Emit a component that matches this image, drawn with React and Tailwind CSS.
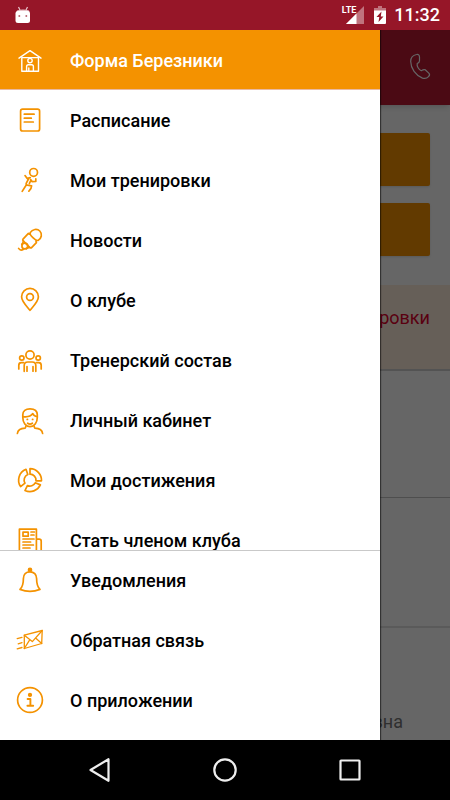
import React from "react";

function Icon({ children, className = "text-[#f49200]" }) {
  return (
    <svg
      viewBox="0 0 30 30"
      className={`size-[30px] shrink-0 ${className}`}
      fill="none"
      stroke="currentColor"
      strokeWidth="1.7"
      strokeLinecap="round"
      strokeLinejoin="round"
      aria-hidden="true"
    >
      {children}
    </svg>
  );
}

const icons = {
  house: (
    <g strokeWidth="1.4">
      <path d="M4 12.2 15 4.7l11 7.5" />
      <path d="M6.8 11.6h16.4M6.8 11.6v13.6h16.7V11.6" />
      <circle cx="15" cy="14.6" r="2.2" />
      <path d="M11.6 25v-4.4q0-1.8 1.8-1.8h3.2q1.8 0 1.8 1.8V25M13.8 22v3" />
    </g>
  ),
  schedule: (
    <>
      <rect x="5.6" y="3.2" width="19" height="21.8" rx="2" />
      <path d="M9.3 8.2h9.8M9.3 12.2h7M9.3 16h9" />
    </>
  ),
  runner: (
    <>
      <circle cx="18.6" cy="6.4" r="3.9" />
      <path d="m10 9.6 2.2 3 3-1M14 12l-2.8 5.4q-.4 1.4 1.2 1.8l4.2.6-.6 2.6-2.2 2.8M11.4 18.6 10.6 20l-3.4 5.4M15.6 13.6l1.6 2 3.6-.2v-2.6M14.4 17.4l1.6-3.2" />
    </>
  ),
  news: (
    <>
      <path d="M15.2 6.600C17.400 3 22.200 2.400 24.800 5s2 7.600-1.800 9.400c-2.200.8-8.800-5.400-7.800-7.800Z" />
      <path d="M14.600 8.200 13.400 7.400 8 13.200q-.6.800 0 1.400l7.200 7.200q.8.400 1.400-.2l4.800-5-.4-1.400" />
      <path d="M8.400 15.200c-.2 1.200-.6 2-1.600 3.200M14.600 21.400c-1.200.2-2.200.6-3.400 1.400" />
      <circle cx="9.800" cy="20" r="2.900" />
      <path d="M3.600 22.400c1 1.600 3 2 5 .8" />
    </>
  ),
  pin: (
    <>
      <path d="M15 24.300C11.600 20 6.600 15.600 6.600 10.800a8.400 8.400 0 0 1 16.800 0C23.400 15.600 18.400 20 15 24.300Z" />
      <circle cx="15" cy="11" r="3.400" />
    </>
  ),
  group: (
    <>
      <circle cx="15" cy="9" r="4.100" />
      <circle cx="6.800" cy="12" r="2.200" />
      <circle cx="23.200" cy="12" r="2.200" />
      <path d="M9.200 25.300v-5.800q0-3.500 3.600-3.500h4.400q3.600 0 3.600 3.500v5.800M12 20.600v4.600M18 20.600v4.600" />
      <path d="M3.800 23v-3.800q0-2.600 2.600-2.600h2M26.200 23v-3.800q0-2.600-2.600-2.600h-2" />
    </>
  ),
  user: (
    <>
      <path d="M7.800 11.600V8.800C7.800 4.800 10.600 2.800 15 2.800s7.300 2 7.300 6v2.800c0 5-3 9.100-7.300 9.100s-7.200-4.100-7.200-9.100Z" />
      <path d="M7.800 10.600c4.200.6 8.200-.4 10-3 .6 1.800 2 2.800 4.400 3" />
      <path d="M12.200 13.400h.3M17.500 13.400h.3M12.600 17.200q2.400 1.800 4.800 0" />
      <path d="M2.400 27.500c.4-3.600 3-5 7.600-5.300.6-.4.800-1 .8-2.200M27.600 27.500c-.4-3.600-3-5-7.600-5.300-.6-.4-.8-1-.8-2.200" />
    </>
  ),
  donut: (
    <>
      <path d="M15 2.700A11.600 11.600 0 0 1 26.500 14.800H21A6 6 0 0 0 15 8.200Z" />
      <path d="M25.400 18.900A11.600 11.600 0 0 1 10 24.500L12.400 19.600A6 6 0 0 0 20.200 16.800Z" />
      <path d="M5.600 20.600A11.600 11.600 0 0 1 11 3.300L12.800 8.500A6 6 0 0 0 10 17.200Z" />
    </>
  ),
  paper: (
    <>
      <path d="M4.400 3.200h17v23H6.400q-2 0-2-2ZM21.400 13.200h2.800q2 0 2 2v9q0 2-2.400 2h-2.400" />
      <path d="M8 6.200h5.200v4H8ZM16 6h3.400M16 9h3M8 13h11M8 16h7.600M8 19h10.400M8 22h7" />
    </>
  ),
  bell: (
    <>
      <circle cx="15" cy="3.900" r="1.500" fill="currentColor" />
      <path d="M15 5.800c-4 0-6.600 2.800-6.600 6.800 0 5.400-.4 8.200-3.400 10.800 5.800 2.200 14.200 2.200 20 0-3-2.600-3.400-5.400-3.400-10.800 0-4-2.600-6.800-6.600-6.800Z" />
    </>
  ),
  mail: (
    <g strokeWidth="1.300">
      <path d="M9.300 9.200 27.200 4.500 26.700 17.500 9.300 22.500Z" />
      <path d="m9.300 9.200 8 6.400 9.900-11.100M9.300 22.500l5.400-8.700M26.700 17.500l-6.100-5.400" />
      <path d="m2.200 12.600 4.800-1.300M3.200 17.800 7 16.700M2.200 22.800 7 21.500" />
    </g>
  ),
  info: (
    <>
      <circle cx="15" cy="14" r="12.400" />
      <circle cx="15" cy="8.900" r="1.300" fill="currentColor" />
      <path d="M12.600 13h2.800v6.800M12.400 19.800h5.800" strokeWidth="1.900" />
    </>
  ),
};

const mainItems = [
  ["schedule", "Расписание"],
  ["runner", "Мои тренировки"],
  ["news", "Новости"],
  ["pin", "О клубе"],
  ["group", "Тренерский состав"],
  ["user", "Личный кабинет"],
  ["donut", "Мои достижения"],
  ["paper", "Стать членом клуба"],
];

const footerItems = [
  ["bell", "Уведомления"],
  ["mail", "Обратная связь"],
  ["info", "О приложении"],
];

function MenuItem({ icon, label }) {
  return (
    <li>
      <a href="#" className="flex h-[60px] items-center gap-[25px] px-[15px] text-black">
        <Icon>{icons[icon]}</Icon>
        <span>{label}</span>
      </a>
    </li>
  );
}

function StatusBar() {
  return (
    <div className="flex h-[30px] shrink-0 items-center bg-[#961628] pr-2.5 pl-[15px] text-white">
      <svg viewBox="0 0 16 18" className="h-[18px] w-4" aria-hidden="true">
        <path d="M3.500 1 5 4M12.500 1 11 4" stroke="#e8c5ca" strokeWidth="1.200" />
        <path d="M2 4.500Q8 2.500 14 4.500L14.500 6h-13Z" fill="#e8c5ca" />
        <rect x=".5" y="5" width="14.500" height="12" rx="2.500" fill="#fff" />
        <circle cx="4.300" cy="10" r="1" fill="#b96672" />
        <circle cx="11.300" cy="10" r="1" fill="#b96672" />
      </svg>
      <div className="ml-auto flex items-center">
        <span className="self-start text-[9px] leading-[10px] font-bold">LTE</span>
        <svg viewBox="0 0 18 18" className="-ml-2.5 size-[18px]" aria-hidden="true">
          <path d="M18 0v18H0Z" fill="#c0737e" />
          <path d="M10.500 7.500V18H0Z" fill="#fff" />
        </svg>
        <svg viewBox="0 0 12 18" className="ml-2.5 h-[18px] w-3" aria-hidden="true">
          <path d="M4 0h4v2h4v3H0V2h4Z" fill="#c0737e" />
          <path d="M0 4.500h12V17q0 1-1 1H1q-1 0-1-1Z" fill="#fff" />
          <path d="M7.500 5.500 2.500 11h2.800L4.500 16l5-5.500H6.800Z" fill="#961628" />
        </svg>
        <span className="ml-2 text-[18px] leading-5 font-medium">11:32</span>
      </div>
    </div>
  );
}

function ClubPage() {
  return (
    <div className="flex h-full flex-col bg-white text-right text-[18px] leading-6">
      <header className="z-10 flex h-[75px] shrink-0 items-center justify-end bg-[#bb1932] pr-[18px] pb-1 shadow-md">
        <button type="button" aria-label="Позвонить" className="text-white">
          <svg
            viewBox="0 0 24 28"
            className="h-7 w-6"
            fill="none"
            stroke="currentColor"
            strokeWidth="1.200"
            strokeLinejoin="round"
            aria-hidden="true"
          >
            <path d="M8.600 2.500c1.800-.4 2.800.6 2.900 2.500v3.800c0 1.700-.8 2.200-2.300 2.700-.6 2.800 1.600 6 4.200 7.200 1.400-1 2.300-1.700 3.800-.9l3.600 3.300c1.300 1.300.9 2.400-.3 3.600-1.600 1.700-3.600 2.200-6 1.400C7.600 23.400 2.800 16.400 2.700 9.400 2.700 5.600 5 3.200 8.600 2.500Z" />
          </svg>
        </button>
      </header>
      <div className="flex h-[180px] shrink-0 flex-col gap-[17px] px-5 pt-7">
        <button type="button" aria-label="Расписание клуба" className="h-[53px] rounded-xs bg-[#f49200] shadow-sm" />
        <button type="button" aria-label="Запись" className="h-[53px] rounded-xs bg-[#f49200] shadow-sm" />
      </div>
      <div className="h-[86px] shrink-0 border-b-2 border-[#d0d0d0] bg-[#ffeedb] px-5 pt-[21px] text-[#e0002b]">
        ровки
      </div>
      <div className="h-[127px] shrink-0 border-b border-[#c4c4c4]" />
      <div className="h-[130px] shrink-0 border-b-2 border-[#e0e0e0]" />
      <div className="grow pt-[82px] pr-[47px] text-[#757575]">вна</div>
    </div>
  );
}

function Drawer() {
  return (
    <nav className="absolute inset-y-0 left-0 flex w-[380px] max-w-[85%] flex-col bg-white text-[18px] leading-6 font-medium shadow-[1px_0_1px_rgba(0,0,0,0.5)]">
      <a
        href="#"
        className="flex h-[60px] shrink-0 items-center gap-[25px] border-b border-[#e9b9a0] bg-[#f49200] px-[15px] pt-0.5 text-white"
      >
        <Icon className="text-white">{icons.house}</Icon>
        <span>Форма Березники</span>
      </a>
      <ul className="min-h-0 grow overflow-hidden pt-px">
        {mainItems.map(([icon, label]) => (
          <MenuItem key={icon} icon={icon} label={label} />
        ))}
      </ul>
      <ul className="shrink-0 border-t border-[#c9c9c9] pb-[9px]">
        {footerItems.map(([icon, label]) => (
          <MenuItem key={icon} icon={icon} label={label} />
        ))}
      </ul>
    </nav>
  );
}

function NavigationBar() {
  return (
    <div className="flex h-[60px] shrink-0 items-center justify-center gap-[97px] bg-black text-[#eeeeee]">
      {[
        ["Назад", <path key="b" d="M22.500 3.200v21.600L4.500 14Z" />],
        ["Домой", <circle key="h" cx="14" cy="14" r="10.700" />],
        ["Обзор", <rect key="o" x="4.500" y="4.500" width="19" height="19" rx=".5" />],
      ].map(([label, shape]) => (
        <button key={label} type="button" aria-label={label}>
          <svg
            viewBox="0 0 28 28"
            className="size-7"
            fill="none"
            stroke="currentColor"
            strokeWidth="2.200"
            strokeLinejoin="round"
            aria-hidden="true"
          >
            {shape}
          </svg>
        </button>
      ))}
    </div>
  );
}

export default function App() {
  return (
    <div className="flex h-screen flex-col overflow-hidden font-[Roboto,'Noto_Sans',sans-serif]">
      <StatusBar />
      <main className="relative min-h-0 grow overflow-hidden">
        <ClubPage />
        <div className="absolute inset-0 z-10 bg-black/60" />
        <div className="absolute inset-0 z-20">
          <Drawer />
        </div>
      </main>
      <NavigationBar />
    </div>
  );
}
